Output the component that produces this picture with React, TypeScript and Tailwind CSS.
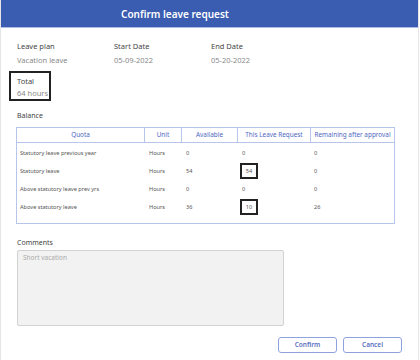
import React from "react";

const rows = [
  { quota: "Statutory leave previous year", unit: "Hours", available: "0", request: "0", remaining: "0", boxed: false },
  { quota: "Statutory leave", unit: "Hours", available: "54", request: "54", remaining: "0", boxed: true },
  { quota: "Above statutory leave prev yrs", unit: "Hours", available: "0", request: "0", remaining: "0", boxed: false },
  { quota: "Above statutory leave", unit: "Hours", available: "36", request: "10", remaining: "26", boxed: true },
];

export default function App() {
  return (
    <div className="w-[420px] h-[360px] bg-white overflow-hidden font-['Noto_Sans','Open_Sans',sans-serif]">
      <div className="w-[419px] h-[360px] border-l border-r border-[#e6e6e6] flex flex-col">
        <div className="h-[28px] bg-[#3a5db1] border-b border-[#a9bbe6] flex items-center pl-[120px]">
          <span className="text-white text-[10px] font-semibold leading-none">Confirm leave request</span>
        </div>

        <div className="flex pl-[16px] pt-[12px]">
          <div className="w-[97px]">
            <div className="text-[7.5px] leading-[12px] text-[#444]">Leave plan</div>
            <div className="text-[7.5px] leading-[12px] mt-[2px] text-[#8a8a8a]">Vacation leave</div>
          </div>
          <div className="w-[97px]">
            <div className="text-[7.5px] leading-[12px] text-[#444]">Start Date</div>
            <div className="text-[7.5px] leading-[12px] mt-[2px] text-[#8a8a8a]">05-09-2022</div>
          </div>
          <div>
            <div className="text-[7.5px] leading-[12px] text-[#444]">End Date</div>
            <div className="text-[7.5px] leading-[12px] mt-[2px] text-[#8a8a8a]">05-20-2022</div>
          </div>
        </div>

        <div className="ml-[8px] mt-[5px] w-[42px] h-[30px] border-2 border-[#222] pl-[6px] pt-[2px]">
          <div className="text-[7.5px] leading-[12px] text-[#444]">Total</div>
          <div className="text-[7.5px] leading-[12px] text-[#8a8a8a]">64 hours</div>
        </div>

        <div className="pl-[16px] mt-[9px] text-[7px] leading-[12px] text-[#444]">Balance</div>

        <div className="ml-[15px] mt-[5px] w-[379px] h-[97px] border border-[#b7c5ea]">
          <div className="flex h-[15px] border-b border-[#b7c5ea] text-[6.4px] text-[#4f67bf]">
            <div className="w-[128px] border-r border-[#b7c5ea] flex items-center justify-center">Quota</div>
            <div className="w-[37px] border-r border-[#b7c5ea] flex items-center justify-center">Unit</div>
            <div className="w-[56px] border-r border-[#b7c5ea] flex items-center justify-center">Available</div>
            <div className="w-[73px] border-r border-[#b7c5ea] flex items-center justify-center">This Leave Request</div>
            <div className="flex-1 flex items-center justify-center whitespace-nowrap">Remaining after approval</div>
          </div>
          <div className="pt-[1px]">
            {rows.map((r) => (
              <div key={r.quota} className="flex h-[18px] items-center text-[5.6px] text-[#555]">
                <div className="w-[128px] pl-[3px]">{r.quota}</div>
                <div className="w-[37px] pl-[4px]">{r.unit}</div>
                <div className="w-[56px] pl-[4px]">{r.available}</div>
                <div className="w-[73px] pl-[4px]">
                  {r.boxed ? (
                    <span className="-ml-[2px] inline-flex items-center justify-center w-[18px] h-[16px] border-2 border-[#222]">
                      {r.request}
                    </span>
                  ) : (
                    r.request
                  )}
                </div>
                <div className="flex-1 pl-[3px]">{r.remaining}</div>
              </div>
            ))}
          </div>
        </div>

        <div className="pl-[16px] mt-[13px] text-[7px] leading-[12px] text-[#444]">Comments</div>
        <div className="ml-[16px] mt-[1px] w-[267px] h-[76px] bg-[#f2f2f2] border border-[#d2d2d2] rounded-[2px] px-[5px] pt-[2px] text-[6.5px] text-[#aaa]">
          Short vacation
        </div>

        <div className="flex justify-end gap-[6px] pr-[16px] mt-[11px]">
          <button className="w-[59px] h-[16px] border border-[#8ea3de] rounded-[3px] text-[6.5px] font-semibold text-[#5a6fbf] bg-white">
            Confirm
          </button>
          <button className="w-[59px] h-[16px] border border-[#8ea3de] rounded-[3px] text-[6.5px] font-semibold text-[#5a6fbf] bg-white">
            Cancel
          </button>
        </div>
      </div>
    </div>
  );
}
